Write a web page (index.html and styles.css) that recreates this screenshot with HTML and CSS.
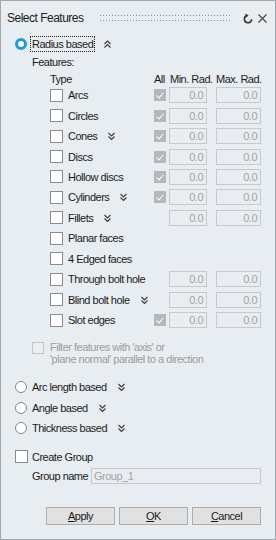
FILE: index.html
```html
<!DOCTYPE html>
<html lang="en">

<head>
    <meta charset="UTF-8">
    <meta name="viewport" content="width=device-width, initial-scale=1.0">
    <title>Select Features</title>
    <link rel="stylesheet" href="styles.css">
</head>

<body>
    <div class="window">
        <div class="titlebar">
            <span class="title">Select Features</span>
            <span class="grip"></span>
            <svg class="refresh" width="10" height="11" viewBox="0 0 10 11">
                <path d="M4.2 2.6 A3.6 3.6 0 1 0 8.6 6.2" fill="none" stroke="#333" stroke-width="1.6" />
                <path d="M2.4 0.4 L5.6 2.6 L2.6 4.8 Z" fill="#333" />
            </svg>
            <svg class="close" width="9" height="9" viewBox="0 0 9 9">
                <path d="M0.5 0.5 L8.5 8.5 M8.5 0.5 L0.5 8.5" stroke="#444" stroke-width="1.1" />
            </svg>
        </div>

        <div class="radio-row first">
            <span class="radio on"></span>
            <span class="label focus">Radius based</span>
            <svg class="chev up" width="7" height="8" viewBox="0 0 7 8">
                <polyline points="0.5,4 3.5,1 6.5,4" />
                <polyline points="0.5,7.5 3.5,4.5 6.5,7.5" />
            </svg>
        </div>

        <div class="features-label">Features:</div>

        <div class="feat-head">
            <span class="type">Type</span>
            <span class="all">All</span>
            <span class="min">Min. Rad.</span>
            <span class="max">Max. Rad.</span>
        </div>

        <div class="feat-list">
            <div class="feat"><span class="box"></span><span class="name">Arcs</span>
                <span class="all-col"><span class="tick"></span></span><span class="num min">0.0</span><span class="num max">0.0</span></div>
            <div class="feat"><span class="box"></span><span class="name">Circles</span>
                <span class="all-col"><span class="tick"></span></span><span class="num min">0.0</span><span class="num max">0.0</span></div>
            <div class="feat"><span class="box"></span><span class="name">Cones</span>
                <svg class="chev" width="7" height="8" viewBox="0 0 7 8"><polyline points="0.5,1 3.5,4 6.5,1" /><polyline points="0.5,4.5 3.5,7.5 6.5,4.5" /></svg>
                <span class="all-col"><span class="tick"></span></span><span class="num min">0.0</span><span class="num max">0.0</span></div>
            <div class="feat"><span class="box"></span><span class="name">Discs</span>
                <span class="all-col"><span class="tick"></span></span><span class="num min">0.0</span><span class="num max">0.0</span></div>
            <div class="feat"><span class="box"></span><span class="name">Hollow discs</span>
                <span class="all-col"><span class="tick"></span></span><span class="num min">0.0</span><span class="num max">0.0</span></div>
            <div class="feat"><span class="box"></span><span class="name">Cylinders</span>
                <svg class="chev" width="7" height="8" viewBox="0 0 7 8"><polyline points="0.5,1 3.5,4 6.5,1" /><polyline points="0.5,4.5 3.5,7.5 6.5,4.5" /></svg>
                <span class="all-col"><span class="tick"></span></span><span class="num min">0.0</span><span class="num max">0.0</span></div>
            <div class="feat"><span class="box"></span><span class="name">Fillets</span>
                <svg class="chev" width="7" height="8" viewBox="0 0 7 8"><polyline points="0.5,1 3.5,4 6.5,1" /><polyline points="0.5,4.5 3.5,7.5 6.5,4.5" /></svg>
                <span class="all-col"></span><span class="num min">0.0</span><span class="num max">0.0</span></div>
            <div class="feat"><span class="box"></span><span class="name">Planar faces</span></div>
            <div class="feat"><span class="box"></span><span class="name">4 Edged faces</span></div>
            <div class="feat"><span class="box"></span><span class="name">Through bolt hole</span>
                <span class="all-col"></span><span class="num min">0.0</span><span class="num max">0.0</span></div>
            <div class="feat"><span class="box"></span><span class="name">Blind bolt hole</span>
                <svg class="chev" width="7" height="8" viewBox="0 0 7 8"><polyline points="0.5,1 3.5,4 6.5,1" /><polyline points="0.5,4.5 3.5,7.5 6.5,4.5" /></svg>
                <span class="all-col"></span><span class="num min">0.0</span><span class="num max">0.0</span></div>
            <div class="feat"><span class="box"></span><span class="name">Slot edges</span>
                <span class="all-col"><span class="tick"></span></span><span class="num min">0.0</span><span class="num max">0.0</span></div>
        </div>

        <div class="filter">
            <span class="box disabled"></span>
            <p>Filter features with 'axis' or<br>'plane normal' parallel to a direction</p>
        </div>

        <div class="modes">
            <div class="radio-row">
                <span class="radio"></span>
                <span class="label">Arc length based</span>
                <svg class="chev" width="7" height="8" viewBox="0 0 7 8"><polyline points="0.5,1 3.5,4 6.5,1" /><polyline points="0.5,4.5 3.5,7.5 6.5,4.5" /></svg>
            </div>
            <div class="radio-row">
                <span class="radio"></span>
                <span class="label">Angle based</span>
                <svg class="chev" width="7" height="8" viewBox="0 0 7 8"><polyline points="0.5,1 3.5,4 6.5,1" /><polyline points="0.5,4.5 3.5,7.5 6.5,4.5" /></svg>
            </div>
            <div class="radio-row">
                <span class="radio"></span>
                <span class="label">Thickness based</span>
                <svg class="chev" width="7" height="8" viewBox="0 0 7 8"><polyline points="0.5,1 3.5,4 6.5,1" /><polyline points="0.5,4.5 3.5,7.5 6.5,4.5" /></svg>
            </div>
        </div>

        <div class="group-row">
            <span class="box"></span>
            <span>Create Group</span>
        </div>
        <div class="group-name">
            <span class="gn-label">Group name</span>
            <span class="gn-input">Group_1</span>
        </div>

        <div class="buttons">
            <button><u>A</u>pply</button>
            <button><u>O</u>K</button>
            <button><u>C</u>ancel</button>
        </div>
    </div>
</body>

</html>
```

FILE: styles.css
```css
* {
    margin: 0;
    padding: 0;
    box-sizing: border-box;
}

body {
    background: #e8edf1;
}

.window {
    width: 276px;
    height: 540px;
    border: 1px solid #a3a8ad;
    background: #e8edf1;
    color: #1b1b1b;
    font-family: "Liberation Sans", Arial, sans-serif;
    font-size: 11px;
    letter-spacing: -0.5px;
    display: flex;
    flex-direction: column;
}

/* title bar */
.titlebar {
    height: 34px;
    display: flex;
    align-items: center;
    padding: 0 8px 0 6px;
}

.titlebar .title {
    font-size: 12px;
}

.grip {
    margin-left: auto;
    width: 132px;
    height: 6px;
    display: flex;
    flex-direction: column;
    justify-content: space-between;
}

.grip::before,
.grip::after {
    content: "";
    height: 1px;
    background: repeating-linear-gradient(90deg, #878b90 0 1px, transparent 1px 3px);
}

.refresh {
    margin-left: 11px;
}

.close {
    margin-left: 5px;
}

/* radios */
.radio-row {
    height: 20.5px;
    display: flex;
    align-items: center;
    padding-left: 14px;
}

.radio-row.first {
    height: 18px;
}

.radio {
    width: 12px;
    height: 12px;
    border-radius: 50%;
    border: 1px solid #858585;
    background: #fff;
    flex: none;
}

.radio.on {
    border: 3px solid #1c99e0;
}

.radio-row .label {
    margin-left: 3px;
    padding: 1px;
    border: 1px solid transparent;
    line-height: 12px;
}

.radio-row .label.focus {
    border: 1px dotted #222;
}

.chev {
    flex: none;
    margin-left: 11px;
}

.chev polyline {
    fill: none;
    stroke: #3a3a3a;
    stroke-width: 1.1;
}

.radio-row .chev {
    margin-left: 9px;
}

/* features table */
.features-label {
    height: 19px;
    line-height: 19px;
    padding-left: 31px;
}

.feat-head {
    height: 13px;
    display: flex;
    align-items: center;
    padding: 0 14px 0 49px;
    white-space: nowrap;
}

.feat-head .type {
    flex: 1;
}

.feat-head .all {
    width: 15px;
}

.feat-head .min {
    width: 47px;
    padding-left: 1px;
}

.feat-head .max {
    width: 45px;
}

.feat {
    height: 20.45px;
    display: flex;
    align-items: center;
    padding: 0 14px 0 49px;
}

.box {
    width: 13px;
    height: 13px;
    border: 1px solid #8a8a8a;
    background: #fff;
    flex: none;
}

.feat .name {
    margin-left: 5px;
    white-space: nowrap;
}

.feat .chev {
    margin-right: auto;
}

.feat .all-col {
    margin-left: auto;
    width: 12px;
    height: 12px;
    margin-right: 3px;
    flex: none;
}

.feat .chev + .all-col {
    margin-left: 0;
}

.tick {
    display: block;
    width: 12px;
    height: 12px;
    background: #b3b8bd;
    position: relative;
}

.tick::after {
    content: "";
    position: absolute;
    left: 4px;
    top: 2px;
    width: 3px;
    height: 6px;
    border: solid #fff;
    border-width: 0 1.5px 1.5px 0;
    transform: rotate(40deg);
}

.num {
    height: 16px;
    border: 1px solid #c6cacf;
    color: #a3a3a3;
    text-align: right;
    padding-right: 3px;
    line-height: 14px;
    flex: none;
}

.num.min {
    width: 38px;
    margin-right: 9px;
}

.num.max {
    width: 45px;
}

/* filter */
.filter {
    margin-top: 10.6px;
    display: flex;
    padding-left: 31px;
    color: #9c9c9c;
}

.box.disabled {
    width: 12px;
    height: 12px;
    border-color: #c3c6c9;
    background: #eceff2;
    margin-top: 1px;
    margin-right: 6px;
}

.filter p {
    line-height: 12.5px;
}

.modes {
    margin-top: 11px;
}

/* group */
.group-row {
    margin-top: 9.5px;
    height: 18px;
    display: flex;
    align-items: center;
    padding-left: 14px;
}

.group-row .box {
    margin-right: 4px;
}

.group-name {
    height: 20px;
    display: flex;
    align-items: center;
    padding: 0 14px 0 31px;
}

.gn-label {
    width: 59px;
    flex: none;
}

.gn-input {
    flex: 1;
    height: 16px;
    border: 1px solid #c6cacf;
    color: #a3a3a3;
    line-height: 14px;
    padding-left: 2px;
}

/* buttons */
.buttons {
    margin-top: 21px;
    display: flex;
    justify-content: flex-end;
    gap: 4px;
    padding-right: 14px;
}

.buttons button {
    width: 69px;
    height: 18px;
    border: 1px solid #adadad;
    background: #e1e1e1;
    font: inherit;
    letter-spacing: -0.5px;
    color: #1b1b1b;
}
```
